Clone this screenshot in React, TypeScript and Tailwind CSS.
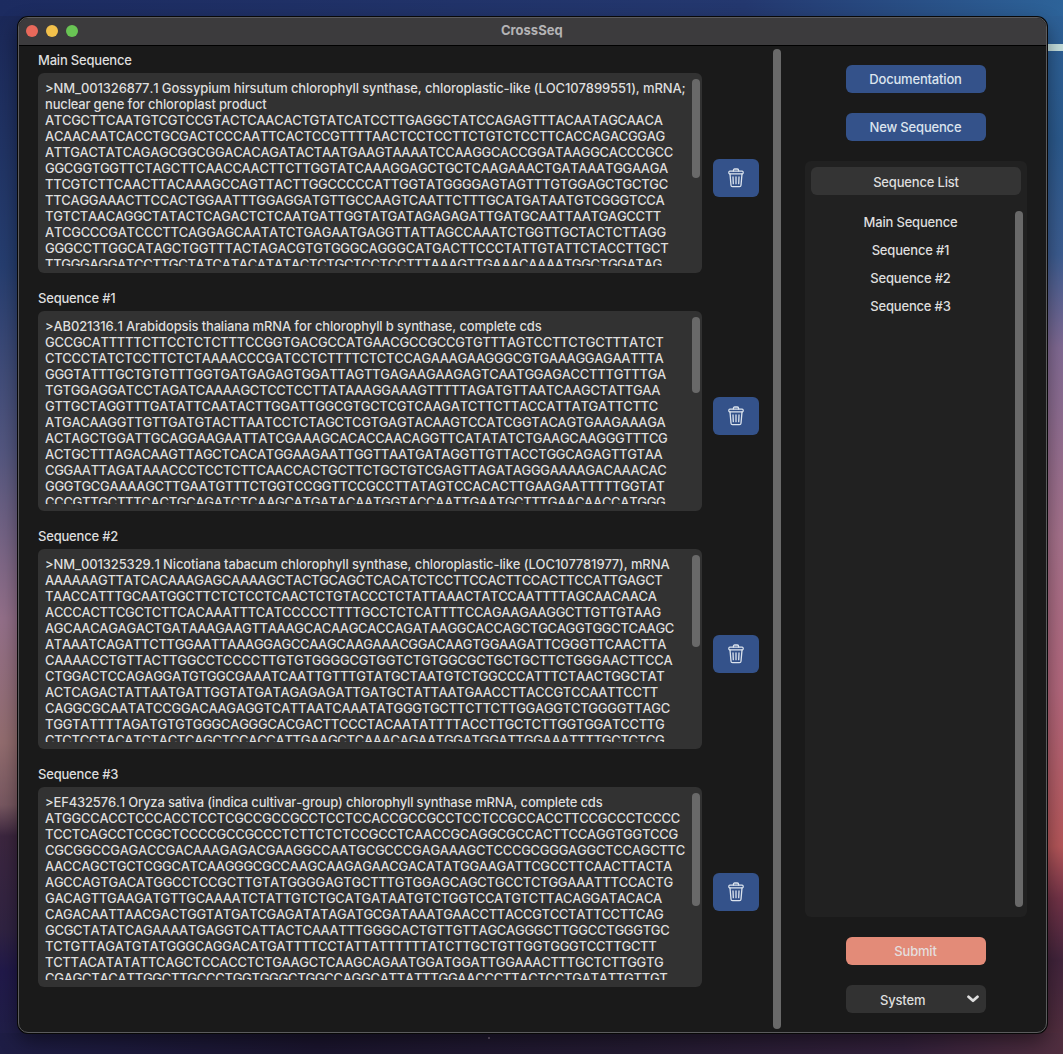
import { useLayoutEffect, useRef } from 'react';

type Line = [text: string, width: number];

const sequences: { name: string; thumb: string; lines: Line[] }[] = [
  {
    name: 'Main Sequence',
    thumb: 'h-[99px]',
    lines: [
      ['>NM_001326877.1 Gossypium hirsutum chlorophyll synthase, chloroplastic-like (LOC107899551), mRNA;', 640.5],
      ['nuclear gene for chloroplast product', 221.5],
      ['ATCGCTTCAATGTCGTCCGTACTCAACACTGTATCATCCTTGAGGCTATCCAGAGTTTACAATAGCAACA', 617.5],
      ['ACAACAATCACCTGCGACTCCCAATTCACTCCGTTTTAACTCCTCCTTCTGTCTCCTTCACCAGACGGAG', 620],
      ['ATTGACTATCAGAGCGGCGGACACAGATACTAATGAAGTAAAATCCAAGGCACCGGATAAGGCACCCGCC', 628],
      ['GGCGGTGGTTCTAGCTTCAACCAACTTCTTGGTATCAAAGGAGCTGCTCAAGAAACTGATAAATGGAAGA', 623],
      ['TTCGTCTTCAACTTACAAAGCCAGTTACTTGGCCCCCATTGGTATGGGGAGTAGTTTGTGGAGCTGCTGC', 623],
      ['TTCAGGAAACTTCCACTGGAATTTGGAGGATGTTGCCAAGTCAATTCTTTGCATGATAATGTCGGGTCCA', 619.5],
      ['TGTCTAACAGGCTATACTCAGACTCTCAATGATTGGTATGATAGAGAGATTGATGCAATTAATGAGCCTT', 616],
      ['ATCGCCCGATCCCTTCAGGAGCAATATCTGAGAATGAGGTTATTAGCCAAATCTGGTTGCTACTCTTAGG', 621],
      ['GGGCCTTGGCATAGCTGGTTTACTAGACGTGTGGGCAGGGCATGACTTCCCTATTGTATTCTACCTTGCT', 623.5],
      ['TTGGGAGGATCCTTGCTATCATACATATACTCTGCTCCTCCTTTAAAGTTGAAACAAAATGGCTGGATAG', 617],
    ],
  },
  {
    name: 'Sequence #1',
    thumb: 'h-[76px]',
    lines: [
      ['>AB021316.1 Arabidopsis thaliana mRNA for chlorophyll b synthase, complete cds', 496.5],
      ['GCCGCATTTTTCTTCCTCTCTTTCCGGTGACGCCATGAACGCCGCCGTGTTTAGTCCTTCTGCTTTATCT', 618.5],
      ['CTCCCTATCTCCTTCTCTAAAACCCGATCCTCTTTTCTCTCCAGAAAGAAGGGCGTGAAAGGAGAATTTA', 618.5],
      ['GGGTATTTGCTGTGTTTGGTGATGAGAGTGGATTAGTTGAGAAGAAGAGTCAATGGAGACCTTTGTTTGA', 621],
      ['TGTGGAGGATCCTAGATCAAAAGCTCCTCCTTATAAAGGAAAGTTTTTAGATGTTAATCAAGCTATTGAA', 615],
      ['GTTGCTAGGTTTGATATTCAATACTTGGATTGGCGTGCTCGTCAAGATCTTCTTACCATTATGATTCTTC', 613],
      ['ATGACAAGGTTGTTGATGTACTTAATCCTCTAGCTCGTGAGTACAAGTCCATCGGTACAGTGAAGAAAGA', 620.5],
      ['ACTAGCTGGATTGCAGGAAGAATTATCGAAAGCACACCAACAGGTTCATATATCTGAAGCAAGGGTTTCG', 622.5],
      ['ACTGCTTTAGACAAGTTAGCTCACATGGAAGAATTGGTTAATGATAGGTTGTTACCTGGCAGAGTTGTAA', 617.5],
      ['CGGAATTAGATAAACCCTCCTCTTCAACCACTGCTTCTGCTGTCGAGTTAGATAGGGAAAAGACAAACAC', 621.5],
      ['GGGTGCGAAAAGCTTGAATGTTTCTGGTCCGGTTCCGCCTTATAGTCCACACTTGAAGAATTTTTGGTAT', 619.5],
      ['CCCGTTGCTTTCACTGCAGATCTCAAGCATGATACAATGGTACCAATTGAATGCTTTGAACAACCATGGG', 620.5],
    ],
  },
  {
    name: 'Sequence #2',
    thumb: 'h-[92px]',
    lines: [
      ['>NM_001325329.1 Nicotiana tabacum chlorophyll synthase, chloroplastic-like (LOC107781977), mRNA', 624.5],
      ['AAAAAAGTTATCACAAAGAGCAAAAGCTACTGCAGCTCACATCTCCTTCCACTTCCACTTCCATTGAGCT', 617.5],
      ['TAACCATTTGCAATGGCTTCTCTCCTCAACTCTGTACCCTCTATTAAACTATCCAATTTTAGCAACAACA', 611.5],
      ['ACCCACTTCGCTCTTCACAAATTTCATCCCCCTTTTGCCTCTCATTTTCCAGAAGAAGGCTTGTTGTAAG', 616],
      ['AGCAACAGAGACTGATAAAGAAGTTAAAGCACAAGCACCAGATAAGGCACCAGCTGCAGGTGGCTCAAGC', 629],
      ['ATAAATCAGATTCTTGGAATTAAAGGAGCCAAGCAAGAAACGGACAAGTGGAAGATTCGGGTTCAACTTA', 621],
      ['CAAAACCTGTTACTTGGCCTCCCCTTGTGTGGGGCGTGGTCTGTGGCGCTGCTGCTTCTGGGAACTTCCA', 627.5],
      ['CTGGACTCCAGAGGATGTGGCGAAATCAATTGTTTGTATGCTAATGTCTGGCCCATTTCTAACTGGCTAT', 619.5],
      ['ACTCAGACTATTAATGATTGGTATGATAGAGAGATTGATGCTATTAATGAACCTTACCGTCCAATTCCTT', 613],
      ['CAGGCGCAATATCCGGACAAGAGGTCATTAATCAAATATGGGTGCTTCTTCTTGGAGGTCTGGGGTTAGC', 625],
      ['TGGTATTTTAGATGTGTGGGCAGGGCACGACTTCCCTACAATATTTTACCTTGCTCTTGGTGGATCCTTG', 619.5],
      ['CTCTCCTACATCTACTCAGCTCCACCATTGAAGCTCAAACAGAATGGATGGATTGGAAATTTTGCTCTCG', 619.5],
    ],
  },
  {
    name: 'Sequence #3',
    thumb: 'h-[113px]',
    lines: [
      ['>EF432576.1 Oryza sativa (indica cultivar-group) chlorophyll synthase mRNA, complete cds', 557.5],
      ['ATGGCCACCTCCCACCTCCTCGCCGCCGCCTCCTCCACCGCCGCCTCCTCCGCCACCTTCCGCCCTCCCC', 635],
      ['TCCTCAGCCTCCGCTCCCCGCCGCCCTCTTCTCTCCGCCTCAACCGCAGGCGCCACTTCCAGGTGGTCCG', 633],
      ['CGCGGCCGAGACCGACAAAGAGACGAAGGCCAATGCGCCCGAGAAAGCTCCCGCGGGAGGCTCCAGCTTC', 640],
      ['AACCAGCTGCTCGGCATCAAGGGCGCCAAGCAAGAGAACGACATATGGAAGATTCGCCTTCAACTTACTA', 627],
      ['AGCCAGTGACATGGCCTCCGCTTGTATGGGGAGTGCTTTGTGGAGCAGCTGCCTCTGGAAATTTCCACTG', 628],
      ['GACAGTTGAAGATGTTGCAAAATCTATTGTCTGCATGATAATGTCTGGTCCATGTCTTACAGGATACACA', 617],
      ['CAGACAATTAACGACTGGTATGATCGAGATATAGATGCGATAAATGAACCTTACCGTCCTATTCCTTCAG', 618.5],
      ['GCGCTATATCAGAAAATGAGGTCATTACTCAAATTTGGGCACTGTTGTTAGCAGGGCTTGGCCTGGGTGC', 624.5],
      ['TCTGTTAGATGTATGGGCAGGACATGATTTTCCTATTATTTTTTATCTTGCTGTTGGTGGGTCCTTGCTT', 611.5],
      ['TCTTACATATATTCAGCTCCACCTCTGAAGCTCAAGCAGAATGGATGGATTGGAAACTTTGCTCTTGGTG', 618.5],
      ['CGAGCTACATTGGCTTGCCCTGGTGGGCTGGCCAGGCATTATTTGGAACCCTTACTCCTGATATTGTTGT', 622.5],
    ],
  },
];

/** A row of text whose letter spacing is adjusted so that it fills `width`. */
function FittedLine({ text, width }: { text: string; width: number }) {
  const ref = useRef<HTMLSpanElement>(null);
  useLayoutEffect(() => {
    const el = ref.current;
    if (!el) return;
    el.style.letterSpacing = '0px';
    const natural = el.getBoundingClientRect().width;
    el.style.letterSpacing = `${(width - natural) / text.length}px`;
  }, [text, width]);
  return (
    <p>
      <span ref={ref}>{text}</span>
    </p>
  );
}

function TrashIcon() {
  return (
    <svg width="16" height="20" viewBox="0 0 16 20" fill="none" stroke="#dce4ee" strokeLinecap="round" strokeLinejoin="round">
      <path d="M5.4 3V2.4Q5.4 1 6.7 1h2.6q1.3 0 1.3 1.4V3" strokeWidth="1.3" />
      <rect x="0.8" y="3.2" width="14.4" height="2.6" rx="1.1" strokeWidth="1.2" />
      <path d="M2 6l1 11.2q.1 1.5 1.6 1.5h6.8q1.5 0 1.6-1.5L14 6" strokeWidth="1.3" />
      <path d="M5 9l.3 6.7M8 9v6.7M11 9l-.3 6.7" strokeWidth="1.3" />
    </svg>
  );
}

function SequenceBlock({ seq }: { seq: (typeof sequences)[number] }) {
  return (
    <section className="h-[238px]">
      <h2 className="h-[27px] pt-[6px] leading-4 tracking-[-0.2px]">{seq.name}</h2>
      <div className="flex items-start gap-[11px]">
        <div className="flex h-[200px] w-[664px] shrink-0 justify-between rounded-[6px] bg-[#323232] pt-[6px] pr-[2px] pl-[7px]">
          <div className="h-[187px] w-[645px] overflow-hidden whitespace-nowrap pt-[1px] leading-4 [font-kerning:none]">
            {seq.lines.map(([text, width]) => (
              <FittedLine key={text} text={text} width={width} />
            ))}
          </div>
          <div className={'w-2 shrink-0 rounded-full bg-[#696969] ' + seq.thumb} />
        </div>
        <button className="mt-[86px] flex h-[38px] w-[46px] shrink-0 items-center justify-center rounded-[6px] bg-[#34528a]">
          <TrashIcon />
        </button>
      </div>
    </section>
  );
}

export default function App() {
  return (
    <div className="relative h-[1054px] w-[1063px] overflow-hidden bg-[linear-gradient(90deg,#1c2b60,#24386f_70%,#2d6399)] px-[18px] pt-[17px] font-['Inter',sans-serif] text-[13px] font-[450] text-[#dedede]">
      <div className="absolute top-4 bottom-0 left-0 w-[30px] bg-[linear-gradient(#1b2858_0%,#263e70_24%,#545780_42%,#94708a_58%,#936d6f_70%,#785861_76%,#3c263f_79%,#302342_88%,#21194a_92%,#202047_100%)]" />
      <div className="absolute top-4 right-0 bottom-0 w-[30px] bg-[linear-gradient(#2d6096_0%,#2b598c_12%,#3c5c90_23%,#816a93_32%,#a5718b_50%,#b2677c_65%,#b45659_80%,#723347_85%,#41243b_91%,#55303f_100%)]" />
      <div className="absolute top-[44px] right-0 h-[7px] w-4 bg-[#c4dedc]" />
      <div className="absolute inset-x-0 bottom-0 h-[21px] bg-[linear-gradient(90deg,#1e1d45,#1b152e_30%,#241b32_60%,#32203a_85%,#502e3f)]" />
      <div className="absolute bottom-[15px] left-[488px] size-[2px] rounded-full bg-[#75647b]" />

      <main className="relative h-[1016px] w-[1029px] overflow-hidden rounded-[10px] border border-[#5b5b5d] bg-[#1a1a1a] shadow-[0_0_0_1px_#080808,0_8px_20px_rgba(0,0,0,0.45)]">
        <header className="flex h-[28px] items-center border-b border-black bg-[#3c3b3d] pb-[1px] pl-[7px]">
          <div className="flex gap-2">
            <span className="size-3 rounded-full bg-[#e8695b]" />
            <span className="size-3 rounded-full bg-[#f2c04b]" />
            <span className="size-3 rounded-full bg-[#69c454]" />
          </div>
          <h1 className="ml-[423px] font-bold text-[#b4b3b5]">CrossSeq</h1>
        </header>

        <div className="flex">
          <div className="w-[735px] pl-[19px]">
            {sequences.map((seq) => (
              <SequenceBlock key={seq.name} seq={seq} />
            ))}
          </div>
          <div className="mt-[3px] ml-[19px] h-[980px] w-2 shrink-0 rounded-full bg-[#696969]" />
          <aside className="ml-6 flex w-[222px] flex-col items-center pt-[19px] tracking-[-0.18px]">
            <button className="h-7 w-[140px] rounded-[6px] bg-[#34528a] pt-[2px] pr-[1px] text-[#dce4ee]">Documentation</button>
            <button className="mt-5 h-7 w-[140px] rounded-[6px] bg-[#34528a] pt-[2px] pr-[1px] text-[#dce4ee]">New Sequence</button>
            <div className="mt-5 h-[756px] w-full rounded-[6px] bg-[#212121] p-[6px]">
              <h2 className="flex h-7 items-center justify-center rounded-[6px] bg-[#343434] pt-[3px]">Sequence List</h2>
              <div className="mt-4 flex">
                <ul className="w-[198px] shrink-0 pl-[1px] text-center">
                  {sequences.map((seq) => (
                    <li key={seq.name} className="h-7 leading-[22px]">{seq.name}</li>
                  ))}
                </ul>
                <div className="ml-[6px] h-[696px] w-2 shrink-0 rounded-full bg-[#696969]" />
              </div>
            </div>
            <button className="mt-5 h-7 w-[140px] rounded-[6px] bg-[#e38b78] pt-[2px] pr-[1px] text-[#e5dede]">Submit</button>
            <button className="mt-5 flex h-7 w-[140px] items-center justify-between rounded-[6px] bg-[#323232] pr-[7px] pl-[34px]">
              <span className="pt-[3px]">System</span>
              <svg width="12" height="8" viewBox="0 0 12 8" fill="none" stroke="#dedede" strokeWidth="2.8" strokeLinecap="round" strokeLinejoin="round">
                <path d="M1.5 1.8L6 5.7l4.5-3.9" />
              </svg>
            </button>
          </aside>
        </div>
      </main>
    </div>
  );
}
